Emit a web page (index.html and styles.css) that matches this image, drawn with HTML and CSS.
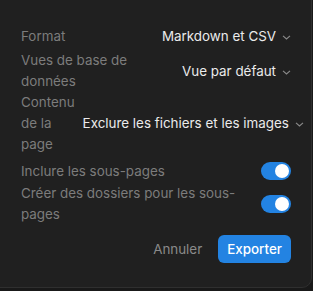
FILE: index.html
```html
<!DOCTYPE html>
<html lang="fr">
<head>
    <meta charset="UTF-8">
    <title>Exporter</title>
    <link rel="stylesheet" href="styles.css">
</head>
<body>
    <div class="export-panel">
        <div class="option-row">
            <div class="option-label">Format</div>
            <div class="option-value">Markdown et CSV <span class="chevron"><svg width="9" height="5" viewBox="0 0 9 5"><path d="M1 0.8 L4.5 4 L8 0.8" fill="none" stroke="currentColor" stroke-width="1.1"/></svg></span></div>
        </div>
        <div class="option-row">
            <div class="option-label">Vues de base de données</div>
            <div class="option-value">Vue par défaut <span class="chevron"><svg width="9" height="5" viewBox="0 0 9 5"><path d="M1 0.8 L4.5 4 L8 0.8" fill="none" stroke="currentColor" stroke-width="1.1"/></svg></span></div>
        </div>
        <div class="option-row">
            <div class="option-label">Contenu de la page</div>
            <div class="option-value">Exclure les fichiers et les images <span class="chevron"><svg width="9" height="5" viewBox="0 0 9 5"><path d="M1 0.8 L4.5 4 L8 0.8" fill="none" stroke="currentColor" stroke-width="1.1"/></svg></span></div>
        </div>
        <div class="option-row toggle-row first-toggle">
            <div class="option-label">Inclure les sous-pages</div>
            <div class="toggle on"><span class="knob"></span></div>
        </div>
        <div class="option-row toggle-row">
            <div class="option-label">Créer des dossiers pour les sous-pages</div>
            <div class="toggle on"><span class="knob"></span></div>
        </div>
        <div class="actions">
            <button class="btn btn-cancel">Annuler</button>
            <button class="btn btn-primary">Exporter</button>
        </div>
    </div>
</body>
</html>
```

FILE: styles.css
```css
body {
    margin: 0;
    background-color: #191919;
    font-family: Inter, "Noto Sans", sans-serif;
    font-size: 13.4px;
    line-height: 21px;
    color: #e6e6e6;
}
.export-panel {
    margin: -1px 1px 0 -1px;
    padding: 22px 20px 24px 21px;
    background-color: #202020;
    border: 1px solid #2f2f2f;
    border-radius: 0 0 10px 0;
    display: flex;
    flex-direction: column;
}
.option-row {
    display: flex;
    align-items: center;
    justify-content: space-between;
    gap: 8px;
    min-height: 28px;
}
.option-label {
    color: #7c7c7c;
    flex: 1 1 auto;
}
.option-value {
    white-space: nowrap;
    display: flex;
    align-items: center;
    gap: 6px;
    color: #ebebeb;
}
.chevron {
    color: #8a8a8a;
    display: flex;
    padding-top: 2px;
}
.toggle-row {
    min-height: 24px;
}
.first-toggle {
    margin-top: 4px;
}
.toggle {
    flex: none;
    width: 30px;
    height: 18px;
    border-radius: 9px;
    background-color: #3a3a3a;
    display: flex;
    align-items: center;
    padding: 0 2px;
    box-sizing: border-box;
}
.toggle.on {
    background-color: #2383e2;
    justify-content: flex-end;
}
.knob {
    width: 14px;
    height: 14px;
    border-radius: 50%;
    background-color: #ffffff;
}
.actions {
    display: flex;
    justify-content: flex-end;
    align-items: center;
    gap: 8px;
    margin-top: 10px;
}
.btn {
    font-family: inherit;
    font-size: 13.4px;
    border: none;
    height: 28px;
    padding: 0 8px;
    border-radius: 6px;
    cursor: pointer;
}
.btn-cancel {
    background: transparent;
    color: #8a8a8a;
}
.btn-primary {
    background-color: #2383e2;
    color: #ffffff;
    font-weight: 500;
    padding: 0 9px;
}
```
